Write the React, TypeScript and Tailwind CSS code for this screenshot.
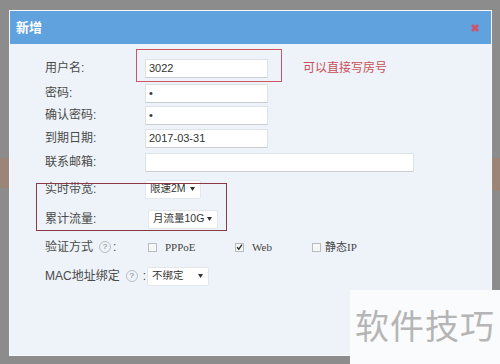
import { useState } from 'react'

const cjk = { fontFamily: '"Liberation Sans", "Noto Sans CJK SC", sans-serif' }

function Label({ children }: { children: React.ReactNode }) {
  return <div className="w-[100px] shrink-0 whitespace-nowrap text-[12px] text-[#4a4a4a]">{children}</div>
}

function Input({ value = '', w = 'w-[123px]' }: { value?: string; w?: string }) {
  return (
    <div
      className={`flex h-[19px] ${w} items-center border border-[#dde2e6] border-b-[#c9ced3] bg-white pl-[3px] text-[11px] text-[#333]`}
    >
      {value}
    </div>
  )
}

function Select({ value, w }: { value: string; w: string }) {
  return (
    <div
      className={`flex h-[19px] ${w} shrink-0 items-center justify-between whitespace-nowrap rounded-[2px] border border-[#e3e7ea] bg-white pl-[4px] pr-[5px] text-[10.5px] text-[#333]`}
    >
      <span className="whitespace-nowrap">{value}</span>
      <svg width="5" height="4" viewBox="0 0 5 4" className="shrink-0">
        <path d="M0 0 H5 L2.5 4 Z" fill="#333" />
      </svg>
    </div>
  )
}

function Help() {
  return (
    <span className="ml-[6px] inline-flex h-[12px] w-[12px] shrink-0 items-center justify-center rounded-full border border-[#b9bec3] text-[8px] leading-none text-[#777]">
      ?
    </span>
  )
}

function Check({ checked, onClick }: { checked: boolean; onClick: () => void }) {
  return (
    <button
      onClick={onClick}
      className="flex h-[9px] w-[9px] items-center justify-center border border-[#b7bcc0] bg-[#f4f6f7]"
    >
      {checked && (
        <svg width="10" height="10" viewBox="0 0 10 10" className="-mt-[1px]">
          <path d="M1.5 5.5 L4 8 L8.5 1.5" fill="none" stroke="#333" strokeWidth="2" />
        </svg>
      )}
    </button>
  )
}

export default function App() {
  const [auth, setAuth] = useState({ pppoe: false, web: true, ip: false })

  return (
    <div className="relative h-[364px] w-[500px] overflow-hidden bg-[#8c8c8c] pl-[9px] pt-[10px]" style={cjk}>
      {/* background bands */}
      <div className="absolute left-0 top-[158px] h-[30px] w-[10px] bg-[#9c8476]" />
      <div className="absolute right-0 top-[158px] h-[33px] w-[8px] bg-[#9c8476]" />

      <div className="relative flex h-[346px] w-[483px] flex-col border border-[#f6f8fa] bg-[#edf3f8]">
        {/* Header */}
        <div className="flex h-[33px] shrink-0 items-center justify-between bg-[#5fa2dd] pl-[6px] pr-[12px]">
          <span className="text-[13px] font-bold text-white">新增</span>
          <svg width="8" height="8" viewBox="0 0 8 8">
            <path d="M1 1 L7 7 M7 1 L1 7" stroke="#d4506c" strokeWidth="2.6" />
          </svg>
        </div>

        {/* Form */}
        <div className="pl-[35px] pt-[13px]">
          <div className="flex h-[22px] items-center">
            <Label>用户名:</Label>
            <div className="relative">
              <Input value="3022" />
              <span className="absolute -bottom-[4px] -left-[9px] -right-[14px] -top-[10px] border border-[#cc5566]" />
            </div>
            <span className="ml-[35px] text-[12px] text-[#c8505a]">可以直接写房号</span>
          </div>

          <div className="mt-[3px] flex h-[22px] items-center">
            <Label>密码:</Label>
            <Input value="•" />
          </div>

          <div className="flex h-[22px] items-center">
            <Label>确认密码:</Label>
            <Input value="•" />
          </div>

          <div className="mt-[1px] flex h-[22px] items-center">
            <Label>到期日期:</Label>
            <Input value="2017-03-31" />
          </div>

          <div className="mt-[2px] flex h-[22px] items-center">
            <Label>联系邮箱:</Label>
            <Input w="w-[269px]" />
          </div>

          <div className="relative w-max">
            <span className="absolute -left-[9px] right-[-9px] top-[5px] h-[48px] border border-[#8a3a44]" />
            <div className="mt-[5px] flex h-[22px] items-center">
              <Label>实时带宽:</Label>
              <Select value="限速2M" w="w-[56px]" />
            </div>
            <div className="mt-[8px] flex h-[22px] items-center">
              <Label>累计流量:</Label>
              <div className="ml-[3px]">
                <Select value="月流量10G" w="w-[70px]" />
              </div>
            </div>
          </div>

          <div className="mt-[6px] flex h-[22px] items-center">
            <div className="flex w-[100px] shrink-0 items-center whitespace-nowrap text-[12px] text-[#4a4a4a]">
              验证方式 <Help />
              <span className="ml-[2px]">:</span>
            </div>
            <div className="ml-[3px] flex items-center text-[11px] text-[#444]" style={{ fontFamily: '"Liberation Serif", "Noto Sans CJK SC", serif' }}>
              <Check checked={auth.pppoe} onClick={() => setAuth({ ...auth, pppoe: !auth.pppoe })} />
              <span className="ml-[8px] w-[70px]">PPPoE</span>
              <Check checked={auth.web} onClick={() => setAuth({ ...auth, web: !auth.web })} />
              <span className="ml-[8px] w-[60px]">Web</span>
              <Check checked={auth.ip} onClick={() => setAuth({ ...auth, ip: !auth.ip })} />
              <span className="ml-[4px]">
                <span style={cjk}>静态</span>IP
              </span>
            </div>
          </div>

          <div className="mt-[7px] flex h-[22px] items-center">
            <div className="flex w-[100px] shrink-0 items-center whitespace-nowrap text-[12px] text-[#4a4a4a]">
              MAC地址绑定 <Help />
              <span className="ml-[5px]">:</span>
            </div>
            <div className="ml-[2px]">
              <Select value="不绑定" w="w-[62px]" />
            </div>
          </div>
        </div>
      </div>

      {/* watermark */}
      <div className="absolute bottom-0 right-0 flex h-[74px] w-[150px] items-center justify-center bg-[#fafbfc]">
        <span className="text-[34px] leading-none tracking-[1px] text-[#b5b5b5]">软件技巧</span>
      </div>
    </div>
  )
}
